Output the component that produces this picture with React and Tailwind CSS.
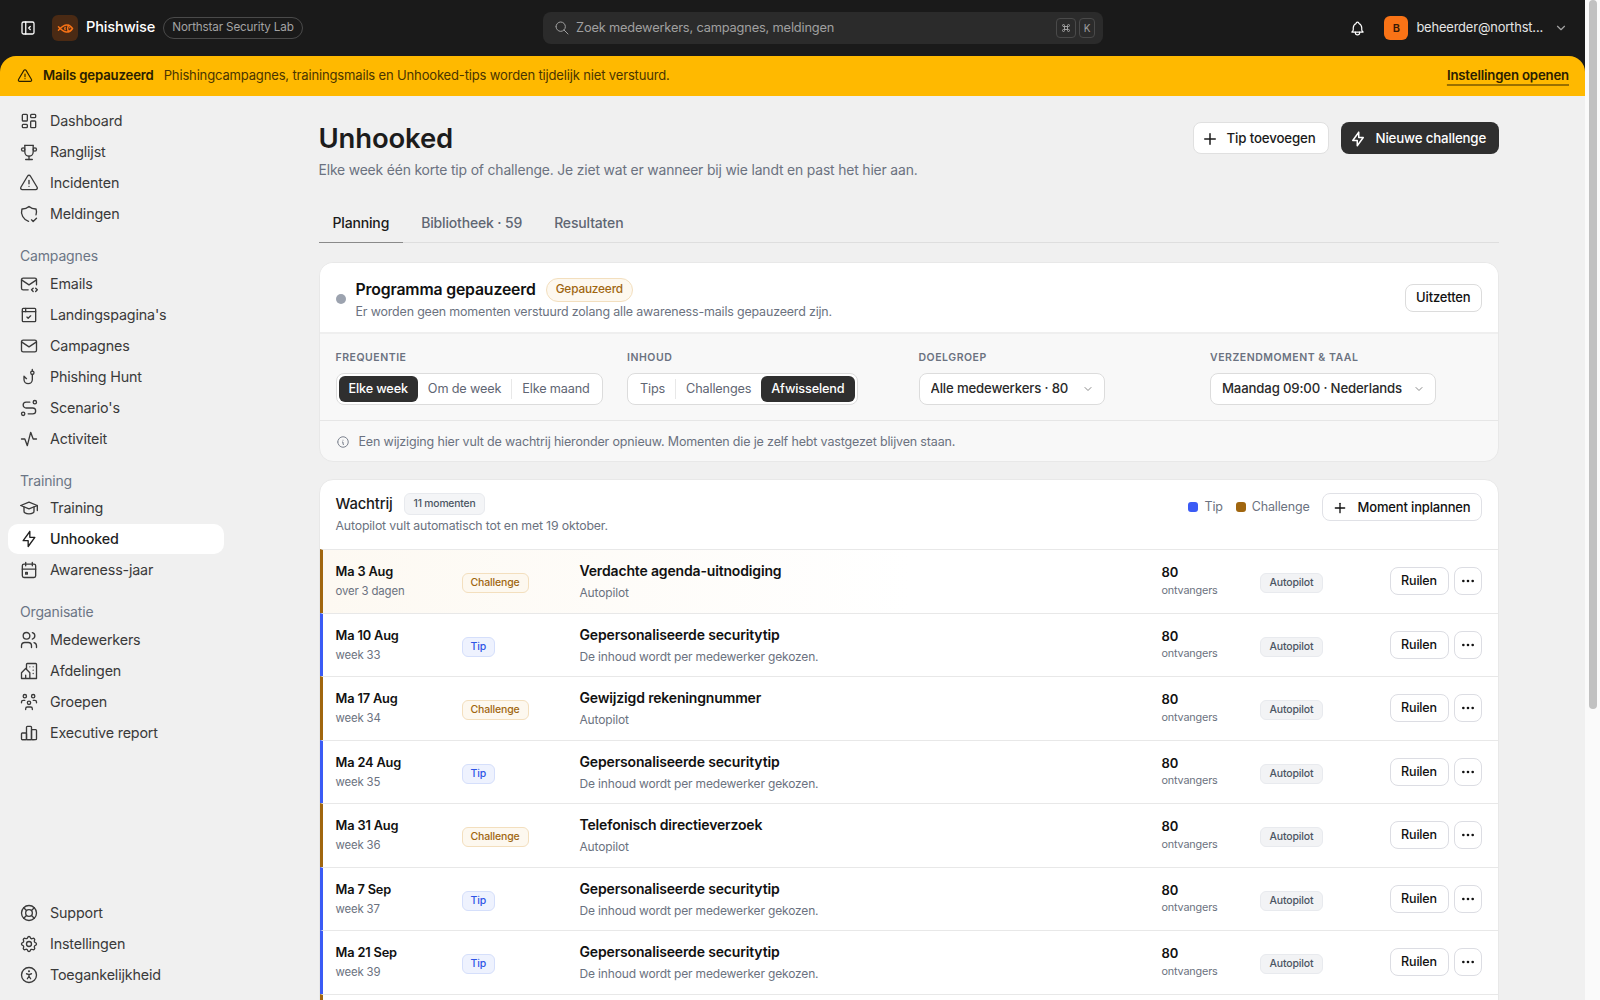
import {
  TbLayoutDashboard, TbTrophy, TbAlertTriangle, TbShieldCheck, TbMailCode, TbBrowserCheck, TbMail,
  TbFishHook, TbRoute, TbActivity, TbSchool, TbBolt, TbCalendarEvent, TbUsers, TbBuildingCommunity,
  TbUsersGroup, TbChartBar, TbLifebuoy, TbSettings, TbAccessible, TbLayoutSidebarLeftCollapse, TbFish,
  TbSearch, TbBell, TbChevronDown, TbPlus, TbDots, TbInfoCircle, TbCommand,
} from 'react-icons/tb';

const navGroups = [
  { items: [['Dashboard', TbLayoutDashboard], ['Ranglijst', TbTrophy], ['Incidenten', TbAlertTriangle], ['Meldingen', TbShieldCheck]] },
  { label: 'Campagnes', items: [['Emails', TbMailCode], ["Landingspagina's", TbBrowserCheck], ['Campagnes', TbMail], ['Phishing Hunt', TbFishHook], ["Scenario's", TbRoute], ['Activiteit', TbActivity]] },
  { label: 'Training', items: [['Training', TbSchool], ['Unhooked', TbBolt], ['Awareness-jaar', TbCalendarEvent]] },
  { label: 'Organisatie', items: [['Medewerkers', TbUsers], ['Afdelingen', TbBuildingCommunity], ['Groepen', TbUsersGroup], ['Executive report', TbChartBar]] },
];

const footerNav = [['Support', TbLifebuoy], ['Instellingen', TbSettings], ['Toegankelijkheid', TbAccessible]];

const tipSub = 'De inhoud wordt per medewerker gekozen.';
const tipTitle = 'Gepersonaliseerde securitytip';

const rows = [
  { date: 'Ma 3 Aug', sub: 'over 3 dagen', type: 'Challenge', title: 'Verdachte agenda-uitnodiging', desc: 'Autopilot', first: true },
  { date: 'Ma 10 Aug', sub: 'week 33', type: 'Tip', title: tipTitle, desc: tipSub },
  { date: 'Ma 17 Aug', sub: 'week 34', type: 'Challenge', title: 'Gewijzigd rekeningnummer', desc: 'Autopilot' },
  { date: 'Ma 24 Aug', sub: 'week 35', type: 'Tip', title: tipTitle, desc: tipSub },
  { date: 'Ma 31 Aug', sub: 'week 36', type: 'Challenge', title: 'Telefonisch directieverzoek', desc: 'Autopilot' },
  { date: 'Ma 7 Sep', sub: 'week 37', type: 'Tip', title: tipTitle, desc: tipSub },
  { date: 'Ma 21 Sep', sub: 'week 39', type: 'Tip', title: tipTitle, desc: tipSub },
  { date: 'Ma 28 Sep', sub: 'week 40', type: 'Challenge', title: 'Onverwachte factuur', desc: 'Autopilot' },
  { date: 'Ma 5 Okt', sub: 'week 41', type: 'Tip', title: tipTitle, desc: tipSub },
  { date: 'Ma 12 Okt', sub: 'week 42', type: 'Challenge', title: 'Gedeeld document', desc: 'Autopilot' },
  { date: 'Ma 19 Okt', sub: 'week 43', type: 'Tip', title: tipTitle, desc: tipSub },
];

function NavItem({ label, icon: Icon, active }) {
  return (
    <a className={`flex h-[30px] items-center gap-[11px] rounded-[10px] pl-[11px] text-[14.3px] ${active ? 'bg-white font-medium text-[#1f1f1f]' : 'text-[#3a3a3a]'}`}>
      <Icon className="h-5 w-5 shrink-0 stroke-[1.6]" />
      <span>{label}</span>
    </a>
  );
}

function Sidebar() {
  return (
    <aside className="sticky top-[96px] flex h-[904px] w-[232px] shrink-0 flex-col justify-between px-2 pt-2.5 pb-[10px]">
      <nav>
        {navGroups.map((group, i) => (
          <div key={i} className="flex flex-col gap-px">
            {group.label && <div className="mt-[16.5px] mb-[2px] flex h-5 items-center pl-3 text-[14px] text-[#6b7585]">{group.label}</div>}
            {group.items.map(([label, icon]) => (
              <NavItem key={label} label={label} icon={icon} active={label === 'Unhooked'} />
            ))}
          </div>
        ))}
      </nav>
      <div className="flex flex-col gap-px">
        {footerNav.map(([label, icon]) => <NavItem key={label} label={label} icon={icon} />)}
      </div>
    </aside>
  );
}

function Header() {
  return (
    <div className="sticky top-0 z-20 bg-[#1a1a1a]">
      <header className="flex h-14 items-center text-white">
        <div className="flex w-[543px] shrink-0 items-center">
          <TbLayoutSidebarLeftCollapse className="ml-[19px] h-[18px] w-[18px] stroke-[1.7]" />
          <div className="ml-[15px] flex h-[26px] w-[26px] items-center justify-center rounded-md bg-[#4a2a14]">
            <TbFish className="h-[17px] w-[17px] text-[#f97316]" />
          </div>
          <span className="ml-2 text-[14.6px] font-medium">Phishwise</span>
          <span className="ml-2 rounded-full border border-[#4a4a4a] px-[8px] py-px text-[11.7px] text-[#a3a3a3]">Northstar Security Lab</span>
        </div>
        <div className="flex h-8 w-[560px] items-center rounded-lg bg-[#2b2b2b] pr-2 pl-[11px] text-[12.8px] text-[#a0a0a0]">
          <TbSearch className="h-4 w-4 stroke-[1.5]" />
          <span className="ml-1.5">Zoek medewerkers, campagnes, meldingen</span>
          <div className="ml-auto flex gap-[3px]">
            <span className="flex h-5 w-5 items-center justify-center rounded border border-[#4a4a4a]"><TbCommand className="h-3 w-3" /></span>
            <span className="flex h-5 w-4 items-center justify-center rounded border border-[#4a4a4a] text-[10px]">K</span>
          </div>
        </div>
        <div className="ml-auto flex items-center">
          <TbBell className="h-[17px] w-[17px] stroke-[1.7]" />
          <span className="ml-[18px] flex h-6 w-6 items-center justify-center rounded-md bg-[#f97316] text-[11px] font-semibold text-[#3a1a05]">B</span>
          <span className="ml-2 text-[12.9px] whitespace-nowrap text-[#e5e5e5]">beheerder@northst...</span>
          <TbChevronDown className="mr-[17px] ml-[11px] h-3.5 w-3.5 text-[#a3a3a3]" />
        </div>
      </header>
      <div className="flex h-10 items-center rounded-t-2xl bg-[#ffb900] pr-4 pl-[17px] text-[13.03px] text-[#4a3500]">
        <TbAlertTriangle className="h-4 w-4 stroke-[1.7] text-[#2a2000]" />
        <span className="ml-[10px] text-[13.2px] font-semibold text-[#2a2000]">Mails gepauzeerd</span>
        <span className="ml-[10px]">Phishingcampagnes, trainingsmails en Unhooked-tips worden tijdelijk niet verstuurd.</span>
        <a className="ml-auto text-[13.2px] font-semibold text-[#2a2000] underline decoration-[#9a7000] decoration-2 underline-offset-[4px]">Instellingen openen</a>
      </div>
    </div>
  );
}

function Segment({ options, active }) {
  return (
    <div className="inline-flex h-8 items-center rounded-lg border border-[#dcdcdc] bg-white p-[2px] text-[12.7px] whitespace-nowrap text-[#5f6673]">
      {options.map((opt, i) => (
        <span key={opt} className="flex h-full items-center">
          {i > 0 && opt !== active && options[i - 1] !== active && <span className="h-5 w-px bg-[#e8e8e8]" />}
          <span className={`flex h-full items-center rounded-md px-[10px] ${opt === active ? 'bg-[#2f2f2f] font-medium text-white' : ''}`}>{opt}</span>
        </span>
      ))}
    </div>
  );
}

function Field({ label, children }) {
  return (
    <div>
      <div className="mb-[7px] text-[10.5px] font-semibold tracking-[0.05em] text-[#6b7280] uppercase">{label}</div>
      {children}
    </div>
  );
}

function SelectBox({ value, width }) {
  return (
    <div className={`flex h-8 items-center justify-between rounded-lg border border-[#dcdcdc] bg-white pr-[10px] pl-[11px] text-[13.2px] font-medium text-[#2a2a2a] ${width}`}>
      <span className="overflow-hidden whitespace-nowrap">{value}</span>
      <TbChevronDown className="ml-2 h-3 w-3 shrink-0 text-[#8a8a8a]" />
    </div>
  );
}

function ProgramCard() {
  return (
    <section className="mt-[19px] overflow-hidden rounded-[14px] border border-[#e8e8e8] bg-[#f8f8f8]">
      <div className="flex h-[71px] items-center border-b-2 border-[#efefef] bg-white px-4">
        <span className="mt-0.5 h-2.5 w-2.5 rounded-full bg-[#9ca3af]" />
        <div className="mt-1 ml-[10px]">
          <div className="flex items-center gap-2.5">
            <span className="text-[15.8px] font-semibold text-[#111]">Programma gepauzeerd</span>
            <span className="rounded-full border border-[#f3dfbe] bg-[#fdf8ef] px-[9px] py-[2px] text-[11.8px] font-medium text-[#a0660f]">Gepauzeerd</span>
          </div>
          <div className="mt-px text-[12.45px] text-[#6b7280]">Er worden geen momenten verstuurd zolang alle awareness-mails gepauzeerd zijn.</div>
        </div>
        <button className="ml-auto h-7 rounded-lg border border-[#dcdcdc] bg-white px-[10px] pt-px text-[13px] font-medium text-[#111]">Uitzetten</button>
      </div>
      <div className="grid h-[87px] grid-cols-4 gap-5 border-b border-[#e6e6e6] px-4 pt-4">
        <Field label="Frequentie"><Segment options={['Elke week', 'Om de week', 'Elke maand']} active="Elke week" /></Field>
        <Field label="Inhoud"><Segment options={['Tips', 'Challenges', 'Afwisselend']} active="Afwisselend" /></Field>
        <Field label="Doelgroep"><SelectBox value="Alle medewerkers · 80" width="w-[186px]" /></Field>
        <Field label="Verzendmoment & taal"><SelectBox value="Maandag 09:00 · Nederlands" width="w-[226px]" /></Field>
      </div>
      <div className="flex h-10 items-center gap-[9px] px-4 pt-[2px] text-[12.5px] text-[#6b7280]">
        <TbInfoCircle className="h-[14px] w-[14px] stroke-[1.5]" />
        <span>Een wijziging hier vult de wachtrij hieronder opnieuw. Momenten die je zelf hebt vastgezet blijven staan.</span>
      </div>
    </section>
  );
}

function TypeBadge({ type }) {
  const cls = type === 'Tip'
    ? 'border-[#d5dffb] bg-[#eef2fe] text-[#2f55e6]'
    : 'border-[#f3dfbe] bg-[#fdf8ef] text-[#a0660f]';
  return <span className={`rounded-md border px-2 py-[1px] text-[10.5px] font-medium ${cls}`}>{type}</span>;
}

function Row({ row }) {
  const barColor = row.type === 'Tip' ? 'border-l-[#3b5bf5]' : 'border-l-[#a0660f]';
  return (
    <div className={`flex h-[63.5px] items-center border-t border-l-[3px] border-t-[#e8e8e8] pr-4 pl-[13px] ${barColor} ${row.first ? 'bg-gradient-to-r from-[#fdf9f2] to-white to-50%' : ''}`}>
      <div className="w-[126px] shrink-0">
        <div className="text-[12.8px] font-semibold text-[#111]">{row.date}</div>
        <div className="mt-[2px] text-[11.4px] text-[#6b7280]">{row.sub}</div>
      </div>
      <div className="flex w-[118px] shrink-0 items-center pt-1"><TypeBadge type={row.type} /></div>
      <div className="min-w-0 flex-1">
        <div className="text-[14px] font-semibold text-[#111]">{row.title}</div>
        <div className="mt-[3px] text-[12px] text-[#6b7280]">{row.desc}</div>
      </div>
      <div className="w-[98px] shrink-0">
        <div className="text-[13px] font-semibold text-[#111]">80</div>
        <div className="text-[10.8px] text-[#6b7280]">ontvangers</div>
      </div>
      <div className="flex w-[130px] shrink-0 items-center pt-1">
        <span className="rounded-md border border-[#e8eaee] bg-[#f2f3f5] px-[9px] py-[1px] text-[10.5px] font-medium text-[#4b5563]">Autopilot</span>
      </div>
      <button className="h-7 w-[59px] rounded-lg border border-[#dcdde3] bg-white pt-px text-[12.5px] font-medium text-[#111]">Ruilen</button>
      <button className="ml-[5px] flex h-7 w-7 items-center justify-center rounded-lg border border-[#dcdde3] bg-white"><TbDots className="h-4 w-4 text-[#111]" /></button>
    </div>
  );
}

function QueueCard() {
  return (
    <section className="mt-[17px] mb-10 overflow-hidden rounded-[14px] border border-[#e8e8e8] bg-white">
      <div className="flex h-[69px] items-start justify-between px-4 pt-[13px]">
        <div>
          <div className="flex items-center gap-[11px]">
            <span className="text-[14.8px] font-medium text-[#1a1a1a]">Wachtrij</span>
            <span className="rounded-md border border-[#e8eaee] bg-[#f4f5f7] px-[9px] py-[2px] text-[10.3px] font-medium text-[#4b5563]">11 momenten</span>
          </div>
          <div className="mt-[2px] text-[12.3px] text-[#6b7280]">Autopilot vult automatisch tot en met 19 oktober.</div>
        </div>
        <div className="flex items-center text-[12.5px] text-[#6b7280]">
          <span className="h-2.5 w-2.5 rounded-[3px] bg-[#3b5bf5]" />
          <span className="ml-[6px] pt-px">Tip</span>
          <span className="ml-[13px] h-2.5 w-2.5 rounded-[3px] bg-[#a0660f]" />
          <span className="ml-[6px] pt-px">Challenge</span>
          <button className="ml-3 flex h-7 items-center rounded-lg border border-[#e0e1e6] bg-white pt-px pr-[10px] pl-[9px] text-[13px] font-medium text-[#111]">
            <TbPlus className="mr-[10px] h-4 w-4" />Moment inplannen
          </button>
        </div>
      </div>
      {rows.map((row) => <Row key={row.date} row={row} />)}
    </section>
  );
}

export default function App() {
  return (
    <div className="flex min-h-screen bg-[#f0f0f0] font-['Inter',sans-serif] tracking-[-0.01em]">
      <div className="w-[1585px] shrink-0">
        <Header />
        <div className="flex">
          <Sidebar />
          <main className="flex-1">
            <div className="mx-auto w-[1180px]">
              <div className="flex items-start justify-between pt-[25px]">
                <div>
                  <h1 className="text-[27.5px] leading-[34px] font-semibold text-[#1c1c1c]">Unhooked</h1>
                  <p className="mt-[5px] text-[13.9px] leading-[21px] text-[#6b7280]">Elke week één korte tip of challenge. Je ziet wat er wanneer bij wie landt en past het hier aan.</p>
                </div>
                <div className="mt-px flex gap-3">
                  <button className="flex h-8 items-center rounded-lg border border-[#e0e0e0] bg-white pt-px pr-3 pl-[7px] text-[13.3px] font-medium text-[#1a1a1a]">
                    <TbPlus className="mr-2 h-[18px] w-[18px]" />Tip toevoegen
                  </button>
                  <button className="flex h-8 w-[158px] items-center rounded-lg bg-[#2f2f2f] pt-px pl-2 text-[13.3px] font-medium text-white">
                    <TbBolt className="mr-[9px] h-[18px] w-[18px]" />Nieuwe challenge
                  </button>
                </div>
              </div>
              <div className="mt-5 flex h-[42px] gap-1 border-b border-[#dedede] text-[14px] font-medium text-[#5f6673]">
                <a className="-mb-px flex items-center border-b border-[#8a8a8a] px-[14px] pt-[2px] text-[#1a1a1a]">Planning</a>
                <a className="flex items-center px-[14px] pt-[2px]">Bibliotheek · 59</a>
                <a className="flex items-center px-[14px] pt-[2px]">Resultaten</a>
              </div>
              <ProgramCard />
              <QueueCard />
            </div>
          </main>
        </div>
      </div>
      <div className="sticky top-0 h-screen w-[15px] shrink-0 bg-[#fafafa]">
        <div className="ml-1 h-[709px] w-2 rounded-full bg-[#c1c1c1]" />
      </div>
    </div>
  );
}
